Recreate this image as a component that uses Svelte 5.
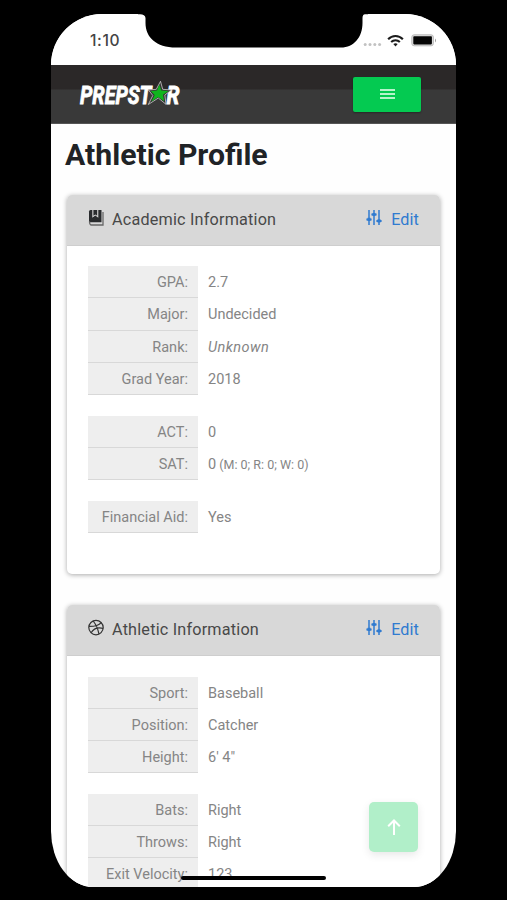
<script>
  const cards = [
    {
      title: 'Academic Information',
      icon: 'book',
      groups: [
        [['GPA:', '2.7'], ['Major:', 'Undecided'], ['Rank:', 'Unknown', 'italic'], ['Grad Year:', '2018']],
        [['ACT:', '0'], ['SAT:', '0', '', '(M: 0; R: 0; W: 0)']],
        [['Financial Aid:', 'Yes']]
      ]
    },
    {
      title: 'Athletic Information',
      icon: 'ball',
      groups: [
        [['Sport:', 'Baseball'], ['Position:', 'Catcher'], ['Height:', '6\' 4"']],
        [['Bats:', 'Right'], ['Throws:', 'Right'], ['Exit Velocity:', '123']]
      ]
    }
  ];
</script>

<div class="stage">
  <div class="phone">
    <div class="status">
      <span class="time">1:10</span>
      <div class="signals">
        <svg class="dots" width="19" height="5" viewBox="0 0 19 5" fill="#c2c2c2">
          <circle cx="2.2" cy="2.5" r="1.5" /><circle cx="7" cy="2.5" r="1.5" /><circle cx="11.8" cy="2.5" r="1.5" /><circle cx="16.6" cy="2.5" r="1.5" />
        </svg>
        <svg class="wifi" width="17" height="13" viewBox="0 0 18 13" fill="none" stroke="#1c1c1c" stroke-width="2.2">
          <path d="M1.2 5.1C5.5.5 12.5.5 16.8 5.1" /><path d="M4.4 8.2c2.6-2.6 6.6-2.6 9.2 0" />
          <path d="M6.7 10.3Q9 8.5 11.3 10.3L9 12.8Z" fill="#1c1c1c" stroke="none" />
        </svg>
        <svg width="26" height="13" viewBox="0 0 26 13">
          <rect x=".8" y=".8" width="21.6" height="11" rx="2.3" fill="#ddd" stroke="#bbb" />
          <rect x="2.3" y="2.2" width="18.6" height="8.2" rx=".8" fill="#050505" />
          <path d="M24 4.5q2 2 0 4z" fill="#999" />
        </svg>
      </div>
    </div>
    <svg class="notch" width="230" height="34" viewBox="0 0 230 34">
      <path d="M0 0H230V.3H227Q224.5 .5 224.5 4V9C224.5 23 216 33.5 203 33.5H38C18 33.5 7.500 23 7.5 9V4Q7 .3 2 .3H0Z" fill="#000" />
    </svg>

    <header>
      <svg class="logo" width="106" height="30" viewBox="0 0 106 30">
        <g fill="#fff" stroke="#fff" stroke-width=".9">
          <text transform="translate(2 24.5) scale(.76 1)">PREPST</text>
          <text transform="translate(88.500 24.5) scale(.8 1)">R</text>
        </g>
        <path d="M82.5 2.3L84.7 10.3L93.5 11L86.8 16L88 25.3L80.3 19L70.3 25.5L74.8 16.5L70.5 11L78.3 10.3Z" fill="#333" stroke="#ccc" stroke-width=".8" />
        <path d="M81.3 5.500L83.3 11.4L90.500 12L85 15.8L86.200 22.3L80.2 18.1L73.500 22.500L76.7 15.9L72.800 12L79 11.4Z" fill="#10b51e" />
      </svg>
      <button class="menu" aria-label="Menu"><i></i><i></i><i></i></button>
    </header>

    <main>
      <h1>Athletic Profile</h1>
      {#each cards as card}
        <section>
          <div class="head">
            {#if card.icon === 'book'}
              <svg width="17" height="18" viewBox="0 0 17 18">
                <path d="M2.5 1H13.5V13.3H2Q1 13.3 1 12V2.5Q1 1 2.5 1Z" fill="#292b2d" />
                <path d="M4.3 1V8.7L7.3 6.6L10.3 8.7V1Z" fill="#d8d8d8" /><path d="M5.4 1H9.2V6.7L7.3 5.4L5.4 6.7Z" fill="#292b2d" />
                <path d="M1.5 12.5Q1.5 16 3.5 16H15V3" fill="none" stroke="#666" stroke-width="1.3" />
              </svg>
            {:else}
              <svg width="17" height="18" viewBox="0 0 17 18" fill="none" stroke="#333" stroke-width="1.2">
                <circle cx="8" cy="8.6" r="7.2" /><path d="M5.2 2C8.5 6.2 10 10 11 15.1M1 7.4C6.5 7.5 10.9 6.3 13.3 3.6M3.1 13.8C5.5 9.4 10.2 8.1 15.2 9.3" />
              </svg>
            {/if}
            <span class="title">{card.title}</span>
            <a href="#edit">
              <svg width="16" height="17" viewBox="0 0 16 17" fill="none" stroke="#307bd0" stroke-width="1.5">
                <path d="M3 1V16M8 1V16M13 1V16" /><path d="M.4 10.4H5.6M5.4 5.5H10.6M10.4 11.9H15.6" stroke-width="2" /><path d="M3 8.8v3.2M8 3.9v3.2M13 10.3v3.2" stroke-width="3" />
              </svg>
              Edit
            </a>
          </div>
          <div class="body">
            {#each card.groups as group}
              <dl>
                {#each group as [label, value, style, note]}
                  <div class="row">
                    <dt>{label}</dt>
                    <dd class={style}>{value}{#if note}<small>&nbsp;{note}</small>{/if}</dd>
                  </div>
                {/each}
              </dl>
            {/each}
          </div>
        </section>
      {/each}
    </main>

    <button class="top" aria-label="Scroll to top">
      <svg width="14" height="18" viewBox="0 0 14 18" fill="none" stroke="#fff" stroke-width="2"><path d="M7 17V2.5M1.2 8.2L7 2.5l5.8 5.7" /></svg>
    </button>
    <div class="home"></div>
  </div>
</div>

<style>
  :global(body) { margin: 0; background: #000; }
  .stage { width: 507px; height: 900px; box-sizing: border-box; padding: 14px 51px 13px; background: #000; overflow: hidden; font-family: Roboto, sans-serif; }
  .phone { position: relative; width: 405px; height: 873px; overflow: hidden; background: #fefefe; border-radius: 51px 51px 42px 42px / 51px 51px 56px 56px; }
  .status { height: 51px; display: flex; justify-content: space-between; box-sizing: border-box; padding: 0 19px 0 39px; background: #fff; }
  .time { font: 500 15.6px/53px Inter, sans-serif; color: #444; letter-spacing: .6px; }
  .signals { display: flex; height: 13px; margin-top: 20px; align-items: center; }
  .dots { margin: 8px 5px 0 0; }
  .wifi { margin-right: 7px; }
  .notch { position: absolute; left: 87px; top: 0; }
  header { height: 59px; display: flex; align-items: center; justify-content: space-between; box-sizing: border-box; padding: 0 35px 0 27px; background: linear-gradient(#2b2828 0 24px, #393939 25px); border-bottom: 1px solid #555; }
  .logo text { font: italic 700 26px Roboto, sans-serif; }
  .menu { width: 68px; height: 35px; border: 0; border-radius: 2px; padding: 0; background: #04ca51; display: flex; flex-direction: column; align-items: center; justify-content: center; gap: 2px; box-shadow: 0 1px 2px #0005; }
  .menu i { width: 15px; height: 2px; background: #b6f4cb; }
  main { padding: 0 16px; }
  h1 { margin: 0 -2px; height: 71px; font-size: 30.2px; line-height: 62px; font-weight: 700; color: #202326; white-space: nowrap; }
  section { margin-bottom: 31.4px; border-radius: 5px; background: #fff; box-shadow: 0 1px 5px #0005; overflow: hidden; }
  .head { height: 51px; box-sizing: border-box; display: flex; align-items: center; padding: 0 21px 2px; background: #d8d8d8; border-bottom: 1px solid #cecece; color: #484848; font-size: 16.2px; }
  .head > svg { margin: -3px 7px 0 0; }
  .title { letter-spacing: .2px; }
  a { margin-left: auto; display: flex; align-items: center; gap: 9px; color: #307bd0; text-decoration: none; letter-spacing: .1px; }
  a svg { margin-top: -4px; }
  .body { padding: 20.4px 21px 40.6px; }
  dl { margin: 0 0 21.2px; }
  dl:last-child { margin-bottom: 0; }
  .row { display: flex; height: 32.08px; font-size: 14.5px; line-height: 34.6px; color: #858585; }
  dt { width: 110px; box-sizing: border-box; padding-right: 10px; text-align: right; background: #eee; border-bottom: 1px solid #d8d8d8; }
  dd { margin: 0 0 0 10px; white-space: nowrap; }
  dd.italic { font-style: italic; letter-spacing: .45px; }
  small { font-size: 12.5px; }
  .top { position: absolute; left: 318px; top: 788px; width: 49px; height: 50px; padding: 0; border: 0; border-radius: 5px; background: #b1efc9; box-shadow: 0 3px 9px #00000018; display: flex; align-items: center; justify-content: center; }
  .home { position: absolute; left: 130px; top: 862px; width: 145px; height: 4px; border-radius: 2px; background: #000; }
</style>
